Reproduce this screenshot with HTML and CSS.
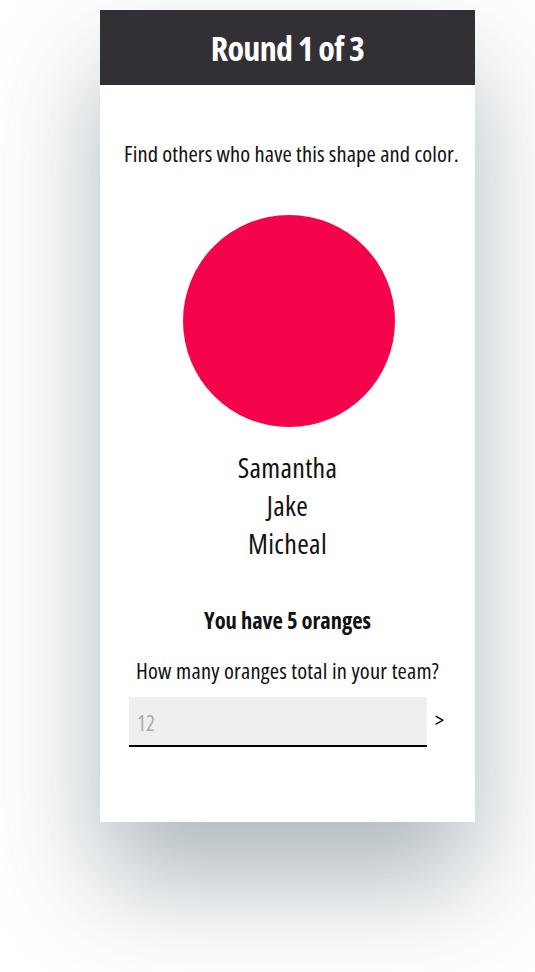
FILE: index.html
```html
<!DOCTYPE html>
<html>
<head>
<meta charset="utf-8">
<link rel="stylesheet" href="styles.css">
</head>
<body>
<div class="card">
  <header class="head">Round 1 of 3</header>
  <main class="body">
    <p class="prompt">Find others who have this shape and color.</p>
    <div class="shape"></div>
    <ul class="names">
      <li>Samantha</li>
      <li>Jake</li>
      <li>Micheal</li>
    </ul>
    <p class="have">You have 5 oranges</p>
    <p class="question">How many oranges total in your team?</p>
    <form class="answer">
      <input class="field" type="text" placeholder="12">
      <button class="go" type="button">&gt;</button>
    </form>
  </main>
</div>
</body>
</html>
```
FILE: styles.css
```css
html, body {
  margin: 0;
  padding: 0;
  background: #ffffff;
}
body {
  box-sizing: border-box;
  min-height: 972px;
  padding: 10px 0 0 100px;
  font-family: "Open Sans", "Liberation Sans", sans-serif;
  font-stretch: 75%;
  color: #111;
}
.card {
  width: 375px;
  height: 812px;
  background: #fff;
  box-shadow: 0 60px 100px rgba(45, 72, 85, 0.38);
  display: flex;
  flex-direction: column;
}
.head {
  height: 75px;
  flex: none;
  background: #323034;
  color: #fff;
  font-weight: bold;
  font-size: 34px;
  letter-spacing: -0.7px;
  display: flex;
  align-items: center;
  justify-content: center;
}
.body {
  display: flex;
  flex-direction: column;
  align-items: center;
  padding-top: 56px;
}
.prompt {
  margin: 0 0 0 8px;
  font-size: 22.5px;
  line-height: 26px;
  letter-spacing: 0.1px;
  white-space: nowrap;
}
.shape {
  width: 212px;
  height: 212px;
  border-radius: 50%;
  background: #f5034b;
  margin: 48px 0 0 2px;
}
.names {
  list-style: none;
  margin: 21px 0 0;
  padding: 0;
  text-align: center;
  font-size: 28px;
  line-height: 38px;
  letter-spacing: 0.3px;
}
.have {
  margin: 44px 0 0;
  font-weight: bold;
  font-size: 22.5px;
  line-height: 30px;
}
.question {
  margin: 22px 0 0;
  font-size: 22.5px;
  line-height: 26px;
  letter-spacing: 0.2px;
}
.answer {
  margin-top: 13px;
  align-self: stretch;
  display: flex;
  align-items: center;
  padding-left: 29px;
}
.field {
  width: 298px;
  height: 50px;
  box-sizing: border-box;
  border: none;
  border-bottom: 2px solid #000;
  background: #efefef;
  font-family: inherit;
  font-stretch: 75%;
  font-size: 21px;
  padding: 4px 8px 0;
  outline: none;
}
.field::placeholder {
  color: #aaa;
}
.go {
  border: none;
  background: none;
  font-family: inherit;
  font-stretch: 75%;
  font-size: 21px;
  padding: 0 0 4px 8px;
  color: #000;
}
```
